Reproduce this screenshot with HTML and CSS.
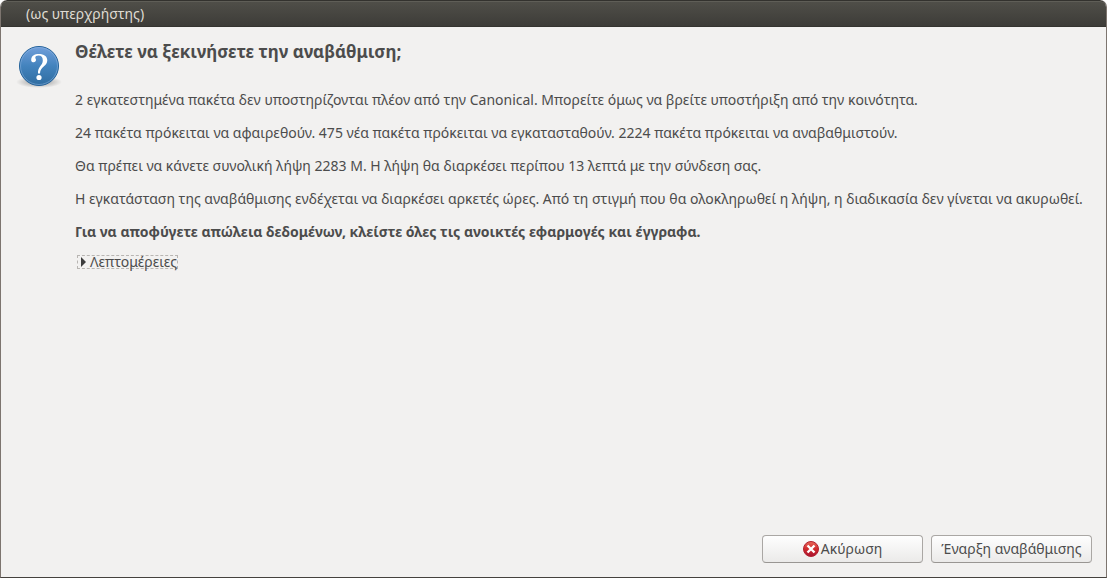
FILE: index.html
```html
<!DOCTYPE html>
<html lang="el">
<head>
<meta charset="utf-8">
<meta name="viewport" content="width=device-width, initial-scale=1">
<title>(ως υπερχρήστης)</title>
<link rel="stylesheet" href="styles.css">
</head>
<body>
<div class="window">
  <header class="titlebar">(ως υπερχρήστης)</header>
  <main class="content">
    <svg class="question" viewBox="0 0 46 46" aria-hidden="true">
      <defs>
        <linearGradient id="blue" x1="0" y1="0" x2="0" y2="1">
          <stop offset="0" stop-color="#729fdb"/>
          <stop offset=".5" stop-color="#4383bd"/>
          <stop offset="1" stop-color="#2f6ca0"/>
        </linearGradient>
        <radialGradient id="shade">
          <stop offset="0" stop-color="#000" stop-opacity=".4"/>
          <stop offset="1" stop-color="#000" stop-opacity="0"/>
        </radialGradient>
      </defs>
      <ellipse cx="23" cy="38" rx="23" ry="6" fill="url(#shade)"/>
      <circle cx="23" cy="22" r="19.5" fill="url(#blue)" stroke="#24629a"/>
      <circle cx="23" cy="22" r="18.5" fill="none" stroke="#8fb8e4" stroke-opacity=".5"/>
      <path d="M15.2 16.4C15 11.6 18.5 9.900 23 9.900C28 9.900 31.300 12.300 31.300 16.300C31.300 22.400 24.300 22.400 24 29.400H22C21.600 22.400 26.800 21.600 26.800 16.400C26.800 13.300 25.300 11.500 22.500 11.500C20.500 11.500 19.300 12.300 19.300 13.500C19.300 14.500 20 15 20 16.100C20 17.300 19.100 18.200 17.700 18.200C16.200 18.200 15.300 17.500 15.200 16.400Z" fill="#fff"/>
      <circle cx="23" cy="33.500" r="2.600" fill="#fff"/>
    </svg>
    <div class="message">
      <h1 class="heading">Θέλετε να ξεκινήσετε την αναβάθμιση;</h1>
      <p class="line">2 εγκατεστημένα πακέτα δεν υποστηρίζονται πλέον από την Canonical. Μπορείτε όμως να βρείτε υποστήριξη από την κοινότητα.</p>
      <p class="line">24 πακέτα πρόκειται να αφαιρεθούν. 475 νέα πακέτα πρόκειται να εγκατασταθούν. 2224 πακέτα πρόκειται να αναβαθμιστούν.</p>
      <p class="line">Θα πρέπει να κάνετε συνολική λήψη 2283 M. Η λήψη θα διαρκέσει περίπου 13 λεπτά με την σύνδεση σας.</p>
      <p class="line">Η εγκατάσταση της αναβάθμισης ενδέχεται να διαρκέσει αρκετές ώρες. Από τη στιγμή που θα ολοκληρωθεί η λήψη, η διαδικασία δεν γίνεται να ακυρωθεί.</p>
      <p class="line strong">Για να αποφύγετε απώλεια δεδομένων, κλείστε όλες τις ανοικτές εφαρμογές και έγγραφα.</p>
      <button class="expander" type="button" aria-expanded="false">
        <svg class="arrow" viewBox="0 0 6 10" aria-hidden="true"><path d="M1 0L6 5L1 10Z" fill="#3c3c3c"/></svg>
        <span>Λεπτομέρειες</span>
      </button>
    </div>
  </main>
  <footer class="actions">
    <button class="button" type="button">
      <svg class="cancel" viewBox="0 0 16 16" aria-hidden="true">
        <defs>
          <linearGradient id="red" x1="0" y1="0" x2="0" y2="1">
            <stop offset="0" stop-color="#e96a5c"/>
            <stop offset=".5" stop-color="#d02a2c"/>
            <stop offset="1" stop-color="#a81432"/>
          </linearGradient>
        </defs>
        <circle cx="8" cy="8" r="7.500" fill="url(#red)" stroke="#b32030"/>
        <path d="M4.500 4.500L11.500 11.500M11.500 4.500L4.500 11.500" stroke="#fff" stroke-width="2.400"/>
      </svg>
      <span>Ακύρωση</span>
    </button>
    <button class="button" type="button">Έναρξη αναβάθμισης</button>
  </footer>
</div>
</body>
</html>
```
FILE: styles.css
```css
* {
  box-sizing: border-box;
}

body {
  margin: 0;
  background: #fff;
  color: #4c4c4c;
  font: 14px/20px "Noto Sans", "Open Sans", sans-serif;
}

.window {
  display: flex;
  flex-direction: column;
  min-height: 100vh;
  overflow: hidden;
  border: 1px solid #7d756f;
  border-top: 0;
  border-bottom-color: #45423e;
  border-radius: 7px 7px 0 0;
  background: #f2f1f0;
}

.titlebar {
  height: 27px;
  margin: 0 -1px;
  padding: 0 26px;
  border-top: 1px solid #33322e;
  border-bottom: 1px solid #353430;
  border-radius: 7px 7px 0 0;
  background: linear-gradient(#504f49, #3d3c38);
  box-shadow: inset 0 1px #5f5e57;
  color: #dfdbd2;
  line-height: 26px;
}

.content {
  display: flex;
  flex: 1;
  align-items: flex-start;
  gap: 13px;
  padding: 13px 0 0 15px;
}

.question {
  flex: none;
  width: 46px;
  height: 46px;
  margin-top: 4px;
}

.message {
  flex: 1;
  min-width: 0;
}

.heading {
  margin: 0 0 26px;
  font-size: 17px;
  line-height: 24px;
}

.line {
  margin: 0 0 13px;
  line-height: 20px;
  white-space: nowrap;
}

.strong {
  font-weight: bold;
}

.expander {
  display: flex;
  align-items: center;
  gap: 4px;
  height: 14px;
  margin: 0 0 0 2px;
  padding: 0 0 0 2px;
  border: 1px dashed #b8b5b2;
  background: none;
  color: inherit;
  font: inherit;
}

.arrow {
  width: 6px;
  height: 10px;
}

.actions {
  display: flex;
  justify-content: flex-end;
  gap: 8px;
  padding: 14px;
}

.button {
  display: flex;
  align-items: center;
  justify-content: center;
  gap: 2px;
  width: 161px;
  height: 28px;
  padding: 0;
  border: 1px solid #aaa7a4;
  border-bottom-color: #999693;
  border-radius: 4px;
  background: linear-gradient(#fefefe, #ebeae9);
  color: inherit;
  font: inherit;
  white-space: nowrap;
}

.cancel {
  width: 16px;
  height: 16px;
}
```
